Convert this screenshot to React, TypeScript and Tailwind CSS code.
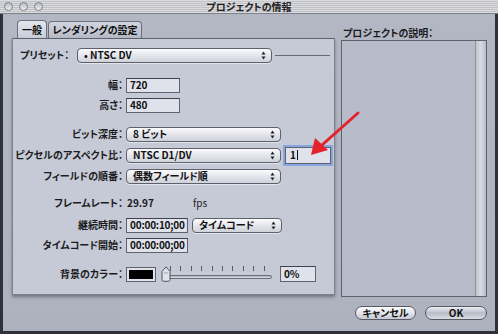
import React from "react";

const font = "font-['Noto_Sans_CJK_JP',sans-serif] [font-feature-settings:'palt']";

function Arrows() {
  return (
    <svg width="5" height="9" viewBox="0 0 5 9" className="shrink-0">
      <path d="M2.5 0.5 L4.5 3.5 L0.5 3.5 Z" fill="#1e2028" />
      <path d="M2.5 8.5 L4.5 5.5 L0.5 5.5 Z" fill="#1e2028" />
    </svg>
  );
}

function Popup({ label, className = "" }: { label: string; className?: string }) {
  return (
    <div
      className={`flex items-center justify-between h-[15px] pl-[6px] pr-[5px] rounded-[4px] border border-[#5d616c] bg-gradient-to-b from-[#fbfbfd] via-[#e4e6ec] to-[#cfd2da] shadow-[0_1px_0_rgba(255,255,255,0.5)] text-[10px] font-bold text-[#111] ${className}`}
    >
      <span className="leading-none">{label}</span>
      <Arrows />
    </div>
  );
}

function Field({ value, className = "" }: { value: string; className?: string }) {
  return (
    <div
      className={`flex items-center h-[15px] px-[3px] border border-[#5f636d] border-t-[#3e424b] bg-[#dfe2ea] text-[10px] font-bold text-[#111] leading-none tracking-[-0.2px] whitespace-nowrap overflow-hidden ${className}`}
    >
      {value}
    </div>
  );
}

function Label({ children }: { children: React.ReactNode }) {
  return (
    <div className="w-[113px] shrink-0 pr-[3px] text-right text-[10px] font-bold text-[#1a1c22] leading-none">
      {children}
    </div>
  );
}

function Slider() {
  const ticks = [0, 1, 2, 3, 4, 5, 6, 7, 8, 9];
  return (
    <div className="relative w-[112px] h-[16px] ml-[5px]">
      <div className="absolute left-[9px] top-0 flex gap-[9.4px]">
        {ticks.map((t) => (
          <div key={t} className="w-px h-[5px] bg-[#555963]" />
        ))}
      </div>
      <div className="absolute left-[4px] right-[1px] top-[9px] h-[4px] rounded-full border border-[#6a6e78] bg-gradient-to-b from-[#a9adb8] to-[#e0e2e8]" />
      <svg width="10" height="16" viewBox="0 0 10 16" className="absolute left-0 top-0">
        <path
          d="M5 0.8 L9 5.5 L9 13.5 Q9 15.3 7.2 15.3 L2.8 15.3 Q1 15.3 1 13.5 L1 5.5 Z"
          fill="#dfe2e9"
          stroke="#4f535d"
          strokeWidth="1"
        />
        <path d="M3 7 L7 7" stroke="#9a9ea8" strokeWidth="1" />
      </svg>
    </div>
  );
}

export default function App() {
  return (
    <div className={`relative w-[498px] h-[334px] flex flex-col bg-[#2f323b] ${font}`}>
      {/* title bar */}
      <div className="relative h-[14px] flex items-center border-b border-[#7c8089] bg-[repeating-linear-gradient(to_bottom,#dcdcdf_0px,#dcdcdf_1px,#c0c1c6_1px,#c0c1c6_2px)]">
        <div className="flex gap-[6px] pl-[4px]">
          {[0, 1, 2].map((i) => (
            <div
              key={i}
              className="w-[9px] h-[9px] rounded-full border border-[#7d8089] bg-gradient-to-b from-[#b9bbc2] to-[#eceef2]"
            />
          ))}
        </div>
        <div className="absolute inset-0 flex items-center justify-center text-[10px] font-bold text-[#222] leading-none">
          プロジェクトの情報
        </div>
      </div>

      {/* body */}
      <div className="flex-1 flex mx-[3px] mb-[3px] bg-gradient-to-b from-[#b3b7c3] to-[#aeb2be]">
        {/* left column */}
        <div className="w-[323px] ml-[9px] mt-[6px] flex flex-col">
          <div className="flex h-[18px] pl-[5px] gap-[1px]">
            <div className="w-[30px] flex items-center justify-center rounded-t-[4px] border border-b-0 border-[#6c707a] bg-gradient-to-b from-[#e4e6ed] to-[#c9cdd8] text-[10px] font-bold text-[#111] leading-none">
              一般
            </div>
            <div className="w-[94px] mt-[1px] flex items-center justify-center rounded-t-[4px] border border-b-0 border-[#6c707a] bg-gradient-to-b from-[#d2d5de] to-[#b6bac6] text-[10px] font-bold text-[#111] leading-none">
              レンダリングの設定
            </div>
          </div>
          <div className="h-[257px] flex flex-col border border-[#7d818c] border-t-[#5e626c] bg-[#c6cad6] shadow-[0_2px_3px_rgba(0,0,0,0.35)]">
            {/* preset */}
            <div className="flex items-center h-[16px] mt-[8px]">
              <div className="w-[64px] pl-[7px] text-[10px] font-bold text-[#1a1c22] leading-none">プリセット：</div>
              <Popup label="• NTSC DV" className="w-[195px]" />
              <div className="flex-1 h-px ml-[3px] mr-[4px] bg-[#666a74]" />
            </div>

            <div className="flex items-center h-[16px] mt-[14px]">
              <Label>幅：</Label>
              <Field value="720" className="w-[54px]" />
            </div>
            <div className="flex items-center h-[16px] mt-[4px]">
              <Label>高さ：</Label>
              <Field value="480" className="w-[54px]" />
            </div>

            <div className="flex items-center h-[16px] mt-[13px]">
              <Label>ビット深度：</Label>
              <Popup label="8 ビット" className="w-[155px]" />
            </div>
            <div className="flex items-center h-[16px] mt-[5px]">
              <Label>ピクセルのアスペクト比：</Label>
              <Popup label="NTSC D1/DV" className="w-[155px]" />
              <div className="ml-[4px] w-[46px] h-[17px] flex items-center px-[4px] border border-[#5f636d] bg-[#dfe2ea] shadow-[0_0_0_2px_#8aa6e0] text-[10px] font-bold text-[#111] leading-none">
                1<span className="w-px h-[10px] bg-[#111] ml-[1px]" />
              </div>
            </div>
            <div className="flex items-center h-[16px] mt-[5px]">
              <Label>フィールドの順番：</Label>
              <Popup label="偶数フィールド順" className="w-[155px]" />
            </div>

            <div className="flex items-center h-[16px] mt-[11px]">
              <Label>フレームレート：</Label>
              <div className="w-[67px] pl-[1px] text-[10px] font-bold text-[#1a1c22] leading-none">29.97</div>
              <div className="text-[10px] text-[#1a1c22] leading-none">fps</div>
            </div>

            <div className="flex items-center h-[16px] mt-[6px]">
              <Label>継続時間：</Label>
              <Field value="00:00:10;00" className="w-[62px]" />
              <Popup label="タイムコード" className="w-[90px] ml-[4px]" />
            </div>
            <div className="flex items-center h-[16px] mt-[4px]">
              <Label>タイムコード開始：</Label>
              <Field value="00:00:00;00" className="w-[62px]" />
            </div>

            <div className="flex items-center h-[16px] mt-[13px]">
              <Label>背景のカラー：</Label>
              <div className="w-[30px] h-[15px] border border-[#5f636d] bg-[#dfe2ea] p-[2px]">
                <div className="w-full h-full bg-black" />
              </div>
              <Slider />
              <Field value="0%" className="w-[36px] ml-[7px] h-[16px]" />
            </div>
          </div>
        </div>

        {/* right column */}
        <div className="w-[146px] ml-[6px] flex flex-col">
          <div className="h-[26px] pt-[14px] pl-[2px] text-[10px] font-bold text-[#1a1c22] leading-none">
            プロジェクトの説明：
          </div>
          <div className="h-[257px] flex border border-[#5e626c] bg-[#b8bcca]">
            <div className="flex-1" />
            <div className="w-[11px] border-l border-[#8e929c] bg-gradient-to-r from-[#c1c5cf] via-[#d8dbe2] to-[#b7bbc6]" />
          </div>
          <div className="flex justify-end gap-[9px] mt-[9px]">
            <div className="w-[61px] h-[14px] flex items-center justify-center rounded-full border border-[#555963] bg-gradient-to-b from-[#fdfdfe] via-[#e2e4ea] to-[#c6c9d2] text-[10px] font-bold text-[#111] leading-none">
              キャンセル
            </div>
            <div className="w-[62px] h-[14px] flex items-center justify-center rounded-full border border-[#555963] bg-gradient-to-b from-[#eef0f4] via-[#b9bdc8] to-[#d9dce3] text-[10px] font-bold text-[#111] leading-none">
              OK
            </div>
          </div>
        </div>
      </div>

      {/* annotation arrow */}
      <svg className="absolute left-0 top-0 pointer-events-none" width="498" height="334" viewBox="0 0 498 334">
        <line x1="358" y1="113" x2="322" y2="145" stroke="#e5212b" strokeWidth="3" strokeLinecap="round" />
        <path d="M311 155 L315 138 L328 150 Z" fill="#e5212b" />
      </svg>
    </div>
  );
}
